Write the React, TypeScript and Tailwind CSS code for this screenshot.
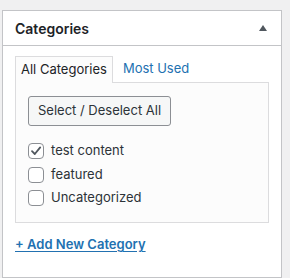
const font = { fontFamily: 'Inter, "Liberation Sans", sans-serif' };

const items = [
  { label: 'test content', checked: true },
  { label: 'featured', checked: false },
  { label: 'Uncategorized', checked: false },
];

function Checkbox({ checked }: { checked: boolean }) {
  return (
    <span className="flex h-4 w-4 shrink-0 items-center justify-center rounded-[4px] border border-[#8c8f94] bg-white">
      {checked && (
        <svg width="12" height="12" viewBox="0 0 12 12">
          <path d="M2 6.2 L4.8 9 L10.2 2.4" fill="none" stroke="#50575e" strokeWidth="1.8" strokeLinecap="round" strokeLinejoin="round" />
        </svg>
      )}
    </span>
  );
}

export default function App() {
  return (
    <div className="h-[278px] w-[290px] bg-[#f0f0f1] pl-[2px] pt-[10px]" style={font}>
      <div className="w-[280px] border border-[#c3c4c7] bg-white">
        {/* Header */}
        <div className="flex h-[35px] items-center justify-between border-b border-[#c3c4c7] pl-[12px] pr-[14px]">
          <h2 className="text-[14px] font-semibold text-[#1d2327]">Categories</h2>
          <svg width="8" height="6" viewBox="0 0 8 6">
            <path d="M4 0 L8 6 L0 6 Z" fill="#50575e" />
          </svg>
        </div>

        <div className="px-[12px] pb-[22px] pt-[9px]">
          {/* Tabs */}
          <div className="flex items-end text-[13px]">
            <div className="relative -mb-px h-[27px] border border-b-0 border-[#dcdcde] bg-[#fcfcfc] px-[5px] pt-[3px] text-[#1d2327]">
              All Categories
            </div>
            <div className="h-[27px] px-[10px] pt-[4px] text-[#2271b1]">Most Used</div>
          </div>

          {/* Panel */}
          <div className="w-[254px] border border-[#dcdcde] bg-[#fcfcfc] px-[12px] pb-[16px] pt-[13px]">
            <button className="h-[30px] rounded-[3px] border border-[#8c8f94] bg-[#f6f7f7] px-[9px] text-[13px] text-[#2c3338]">
              Select / Deselect All
            </button>
            <ul className="mt-[17px] flex flex-col gap-[7.5px]">
              {items.map((it) => (
                <li key={it.label} className="flex h-4 items-center gap-[7px] text-[13px] text-[#2c3338]">
                  <Checkbox checked={it.checked} />
                  <span>{it.label}</span>
                </li>
              ))}
            </ul>
          </div>

          <a className="mt-[12px] inline-block text-[13px] font-semibold text-[#2271b1] underline underline-offset-2">
            + Add New Category
          </a>
        </div>
      </div>
    </div>
  );
}
